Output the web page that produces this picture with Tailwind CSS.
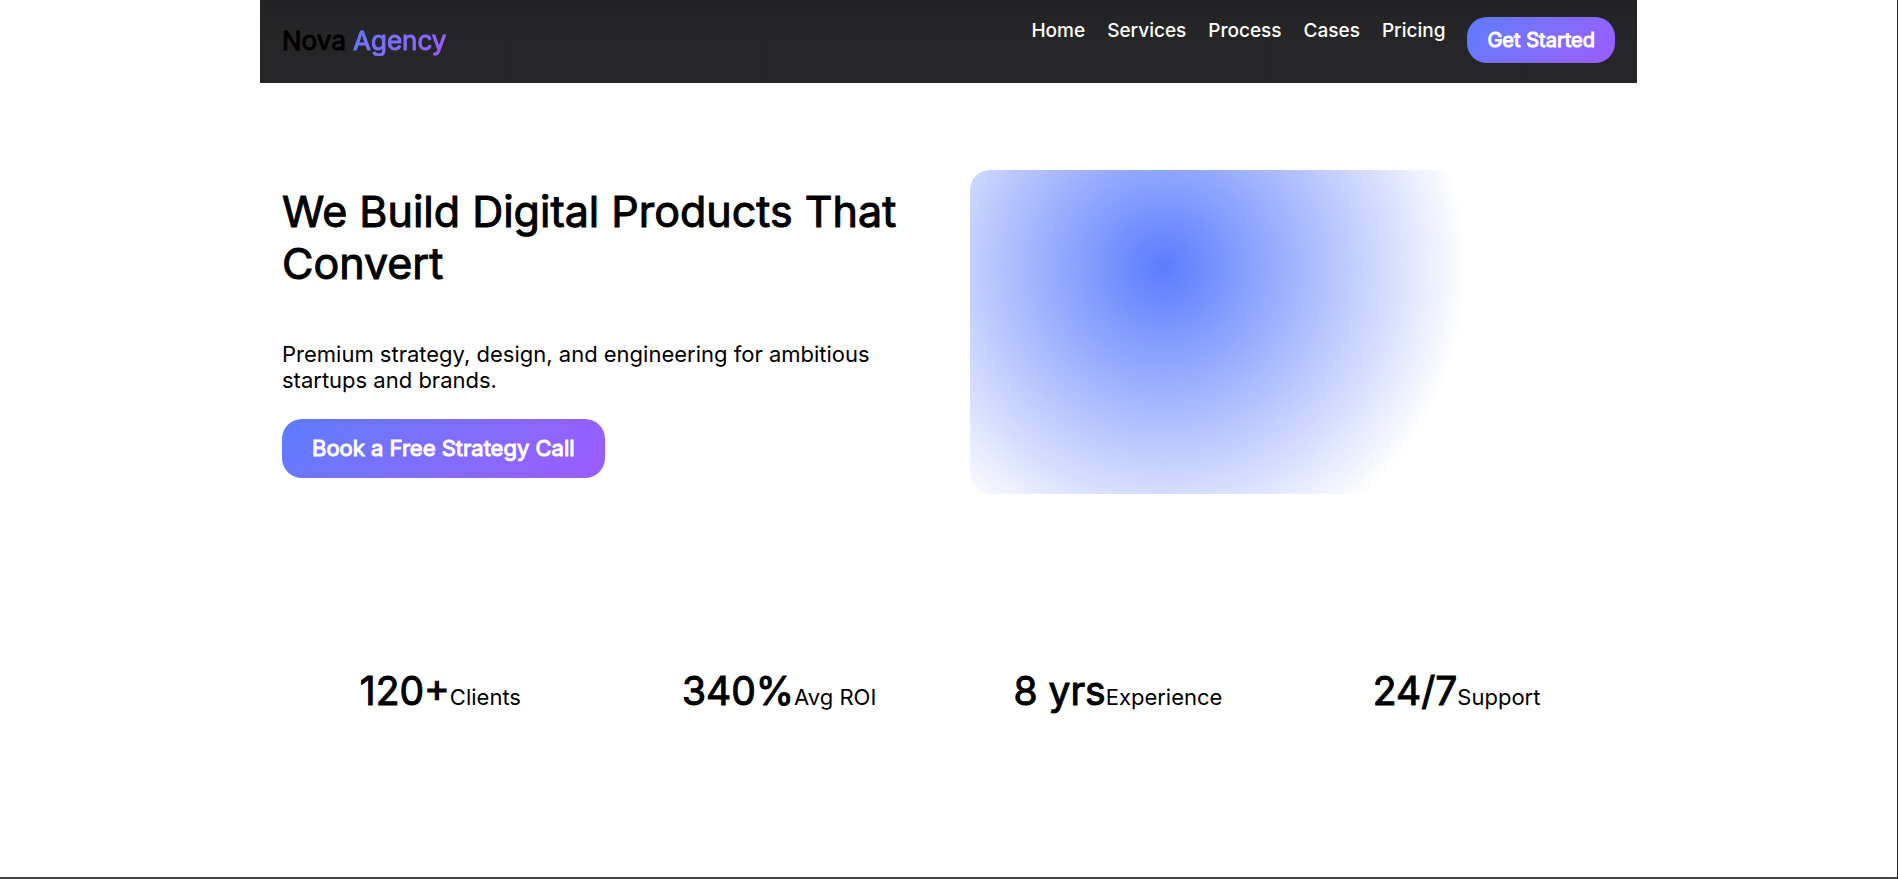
<!DOCTYPE html>
<html lang="en">
<head>
<meta charset="utf-8">
<title>Nova Agency</title>
<script src="https://cdn.jsdelivr.net/npm/@tailwindcss/browser@4"></script>
</head>
<body class="min-h-screen bg-white font-['Inter',sans-serif] text-[22px] leading-[26px] text-black border-r border-b-2 border-r-[#2a2a2c] border-b-[#454549]">
<div class="mx-auto max-w-[1377px]">
  <header class="flex items-start justify-between bg-linear-to-b from-[#222224] to-[#262628] to-40% px-[22px] pt-[17px] pb-5">
    <a href="#" class="pt-2 text-[26px] leading-8 [-webkit-text-stroke:1px]">Nova <span class="bg-linear-135 from-[#5b7cff] to-[#9b5bff] bg-clip-text text-transparent [-webkit-text-stroke-color:transparent]">Agency</span></a>
    <nav class="flex items-start gap-[22px] text-[19px] leading-7 text-white font-medium">
      <a href="#">Home</a>
      <a href="#">Services</a>
      <a href="#">Process</a>
      <a href="#">Cases</a>
      <a href="#">Pricing</a>
      <button type="button" class="h-[46px] rounded-[20px] bg-linear-135 from-[#5b7cff] to-[#9b5bff] px-5 text-[20px] font-normal [-webkit-text-stroke:1px]">Get Started</button>
    </nav>
  </header>
  <main>
    <section class="grid grid-cols-2 items-center gap-[42px] px-[22px] pt-[87px] pb-[88px]">
      <div class="pb-[2px]">
        <h1 class="mb-[52px] text-[43px] leading-[52px] [-webkit-text-stroke:1px]">We Build Digital Products That Convert</h1>
        <p class="mb-[26px]">Premium strategy, design, and engineering for ambitious startups and brands.</p>
        <button type="button" class="block h-[59px] rounded-[20px] bg-linear-135 from-[#5b7cff] to-[#9b5bff] px-[30px] text-white [-webkit-text-stroke:1px]">Book a Free Strategy Call</button>
      </div>
      <div class="h-[324px] rounded-[20px] bg-[radial-gradient(circle_at_30%_30%,#5b7cff,transparent_60%)]"></div>
    </section>
    <section class="grid grid-cols-4 gap-[22px] px-[22px] py-[85px] text-center">
      <div><strong class="text-[39px] leading-[48px] font-normal [-webkit-text-stroke:1px]">120+</strong>Clients</div>
      <div><strong class="text-[39px] leading-[48px] font-normal [-webkit-text-stroke:1px]">340%</strong>Avg ROI</div>
      <div><strong class="text-[39px] leading-[48px] font-normal [-webkit-text-stroke:1px]">8 yrs</strong>Experience</div>
      <div><strong class="text-[39px] leading-[48px] font-normal [-webkit-text-stroke:1px]">24/7</strong>Support</div>
    </section>
  </main>
</div>
</body>
</html>
